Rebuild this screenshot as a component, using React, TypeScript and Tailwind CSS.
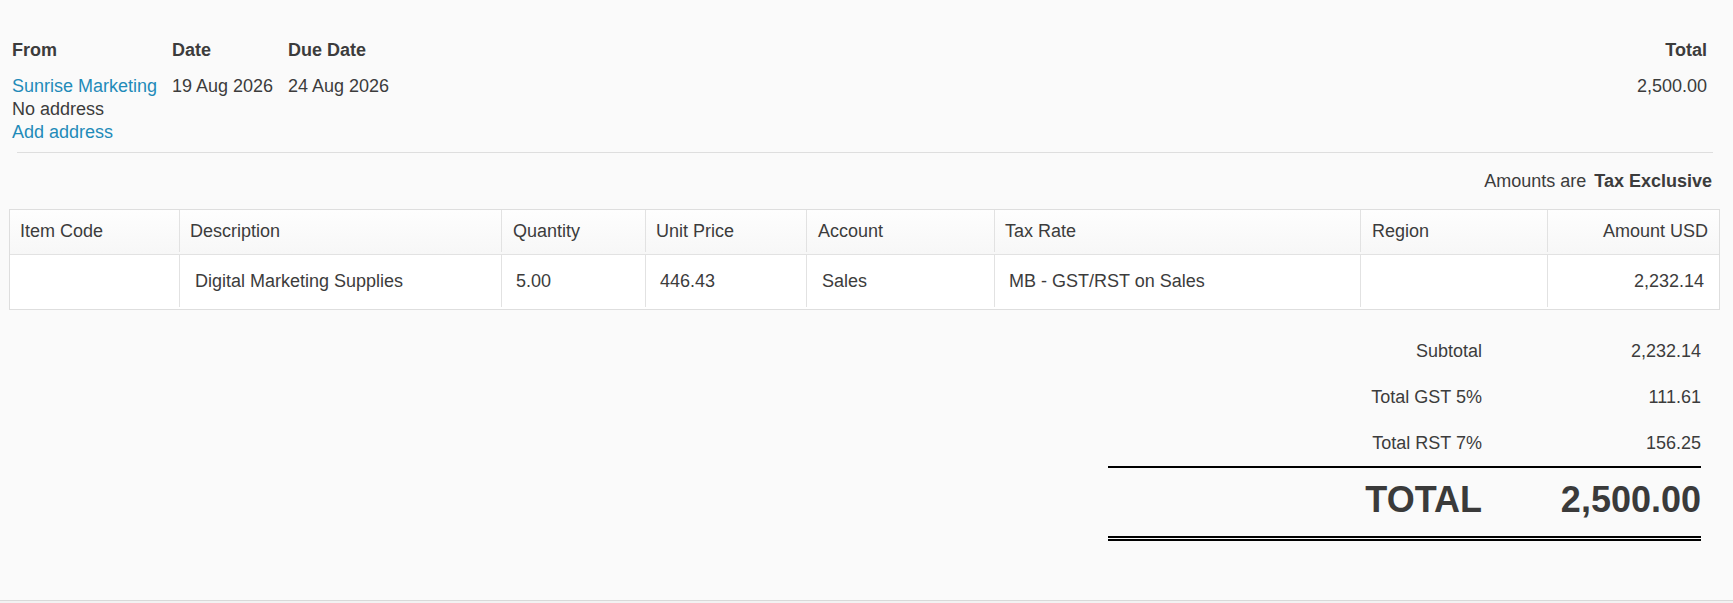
import React from 'react'

type Line = {
  itemCode: string
  description: string
  quantity: string
  unitPrice: string
  account: string
  taxRate: string
  region: string
  amount: string
}

const columns = [
  { label: 'Item Code', width: 'w-[170px]', pad: 'pl-[10px]' },
  { label: 'Description', width: 'w-[322px]', pad: 'pl-[10px]' },
  { label: 'Quantity', width: 'w-[144px]', pad: 'pl-[11px]' },
  { label: 'Unit Price', width: 'w-[161px]', pad: 'pl-[10px]' },
  { label: 'Account', width: 'w-[188px]', pad: 'pl-[11px]' },
  { label: 'Tax Rate', width: 'w-[366px]', pad: 'pl-[10px]' },
  { label: 'Region', width: 'w-[187px]', pad: 'pl-[11px]' },
]

const lines: Line[] = [
  {
    itemCode: '',
    description: 'Digital Marketing Supplies',
    quantity: '5.00',
    unitPrice: '446.43',
    account: 'Sales',
    taxRate: 'MB - GST/RST on Sales',
    region: '',
    amount: '2,232.14',
  },
]

const taxLines = [
  { label: 'Subtotal', value: '2,232.14' },
  { label: 'Total GST 5%', value: '111.61' },
  { label: 'Total RST 7%', value: '156.25' },
]

function InvoiceHeader() {
  return (
    <div className="flex justify-between px-[12px] pr-[26px] leading-[23px]">
      <div className="flex">
        <div className="w-[160px]">
          <div className="font-bold">From</div>
          <div className="mt-[13px]">
            <a className="block text-[#1f8bb9]" href="#">Sunrise Marketing</a>
            <div>No address</div>
            <a className="block text-[#1f8bb9]" href="#">Add address</a>
          </div>
        </div>
        <div className="w-[116px]">
          <div className="font-bold">Date</div>
          <div className="mt-[13px]">19 Aug 2026</div>
        </div>
        <div>
          <div className="font-bold">Due Date</div>
          <div className="mt-[13px]">24 Aug 2026</div>
        </div>
      </div>
      <div className="text-right">
        <div className="font-bold">Total</div>
        <div className="mt-[13px]">2,500.00</div>
      </div>
    </div>
  )
}

function LineItems() {
  return (
    <div className="mx-[9px] mr-[13px] mt-4 border border-[#dedede]">
      <div className="flex h-[45px] border-b border-[#e2e2e2] bg-gradient-to-b from-[#fefefe] to-[#f7f7f7] pb-[2px]">
        {columns.map((c) => (
          <div key={c.label} className={`${c.width} ${c.pad} flex items-center border-r border-[#e2e2e2]`}>
            {c.label}
          </div>
        ))}
        <div className="flex flex-1 items-center justify-end pr-[11px]">Amount USD</div>
      </div>
      {lines.map((l, i) => (
        <div key={i} className="flex h-[54px] bg-white pb-[2px]">
          <div className="flex w-[170px] items-center border-r border-[#e2e2e2] pl-[15px]">{l.itemCode}</div>
          <div className="flex w-[322px] items-center border-r border-[#e2e2e2] pl-[15px]">{l.description}</div>
          <div className="flex w-[144px] items-center border-r border-[#e2e2e2] pl-[14px]">{l.quantity}</div>
          <div className="flex w-[161px] items-center border-r border-[#e2e2e2] pl-[14px]">{l.unitPrice}</div>
          <div className="flex w-[188px] items-center border-r border-[#e2e2e2] pl-[15px]">{l.account}</div>
          <div className="flex w-[366px] items-center border-r border-[#e2e2e2] pl-[14px]">{l.taxRate}</div>
          <div className="flex w-[187px] items-center border-r border-[#e2e2e2] pl-[14px]">{l.region}</div>
          <div className="flex flex-1 items-center justify-end pr-[15px]">{l.amount}</div>
        </div>
      ))}
    </div>
  )
}

function Totals() {
  return (
    <div className="ml-auto mr-[32px] mt-[18px] w-[593px]">
      {taxLines.map((t) => (
        <div key={t.label} className="grid h-[46px] grid-cols-[374px_1fr] items-center text-right">
          <div>{t.label}</div>
          <div>{t.value}</div>
        </div>
      ))}
      <div className="grid h-[75px] grid-cols-[374px_1fr] items-center border-t-2 border-b-[5px] border-t-black border-b-black border-double pb-1 text-right text-[36px] font-bold leading-none text-[#3a3a3a]">
        <div>TOTAL</div>
        <div>2,500.00</div>
      </div>
    </div>
  )
}

export default function App() {
  return (
    <div
      className="min-h-screen bg-[#f2f2f2] text-[18px] text-[#3c3c3c]"
      style={{ fontFamily: '"Liberation Sans", Arial, Helvetica, sans-serif' }}
    >
      <div className="h-[601px] border-b border-[#d9d9d9] bg-[#fafafa] pt-[39px]">
        <InvoiceHeader />
        <div className="ml-[17px] mr-[20px] mt-[8px] border-t border-[#dedede]" />
        <div className="mt-[17px] flex justify-end pr-[21px] leading-[23px]">
          <span>Amounts are</span>
          <span className="ml-[8px] font-bold">Tax Exclusive</span>
        </div>
        <LineItems />
        <Totals />
      </div>
    </div>
  )
}
